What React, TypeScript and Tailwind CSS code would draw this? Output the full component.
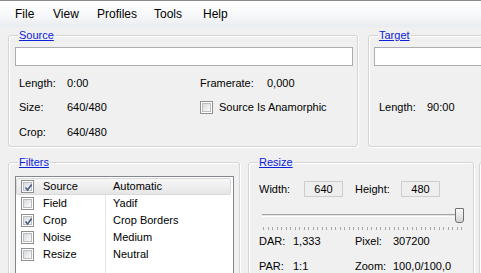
import React from 'react';

const Check: React.FC<{ checked?: boolean }> = ({ checked }) => (
  <span className="flex h-[13px] w-[13px] shrink-0 items-center justify-center border border-[#8e8f8f] bg-white p-px">
    <span className="relative flex h-full w-full items-center justify-center border border-[#b9bdc2] bg-gradient-to-br from-[#d9dadc] to-[#fbfbfb]">
      {checked && (
        <svg width="11" height="11" viewBox="0 0 11 11" className="absolute -left-px -top-px">
          <path d="M2.5 5.5 L4.6 8 L8.6 2.6" fill="none" stroke="#4a5f8c" strokeWidth="1.7" />
        </svg>
      )}
    </span>
  </span>
);

const Group: React.FC<{ title: string; className: string; children?: React.ReactNode }> = ({ title, className, children }) => (
  <div
    className={`relative shrink-0 rounded-[3px] border border-[#d5d5d5] shadow-[inset_1px_1px_0_#ffffff,1px_1px_0_#ffffff] ${className}`}
  >
    {title && (
      <span className="absolute left-[9px] top-[-7px] bg-[#f0f0f0] px-px leading-[13px] text-[#0a22d8] underline">
        {title}
      </span>
    )}
    {children}
  </div>
);

const filters = [
  { name: 'Source', value: 'Automatic', on: true, selected: true },
  { name: 'Field', value: 'Yadif', on: false },
  { name: 'Crop', value: 'Crop Borders', on: true },
  { name: 'Noise', value: 'Medium', on: false },
  { name: 'Resize', value: 'Neutral', on: false },
];

const menu = [
  { label: 'File', w: 'w-[38px]' },
  { label: 'View', w: 'w-[44px]' },
  { label: 'Profiles', w: 'w-[57px]' },
  { label: 'Tools', w: 'w-[49px]' },
  { label: 'Help', w: 'w-[40px]' },
];

// tick marks under the trackbar
const ticks = Array.from({ length: 45 }, (_, i) => Math.round(i * 4.5) + 0.5);

export default function App() {
  return (
    <div className="h-[273px] w-[481px] overflow-hidden bg-[#f0f0f0] font-['Liberation_Sans',Arial,sans-serif] text-[11px] leading-[13px] text-black">
      {/* menu strip */}
      <div className="flex h-[27px] items-center border-t border-[#8c8c8c] bg-gradient-to-b from-white via-[#f8f9fa] to-[#e9ecf0] pl-[15px] text-[12px]">
        {menu.map((m) => (
          <span key={m.label} className={`${m.w} shrink-0`}>
            {m.label}
          </span>
        ))}
      </div>

      <div className="pl-2 pt-[8px]">
        <div className="flex">
          <Group title="Source" className="h-[112px] w-[350px]">
            <div className="ml-[6px] mt-[11px] h-[19px] w-[338px] border border-[#abadb3] bg-white" />
            <div className="mt-[5px] pl-[10px]">
              <div className="flex h-[24px] items-center">
                <span className="w-[48px]">Length:</span>
                <span className="w-[133px]">0:00</span>
                <span className="w-[67px]">Framerate:</span>
                <span>0,000</span>
              </div>
              <div className="flex h-[25px] items-center">
                <span className="w-[48px]">Size:</span>
                <span className="w-[133px]">640/480</span>
                <Check />
                <span className="ml-[6px]">Source Is Anamorphic</span>
              </div>
              <div className="flex h-[24px] items-center">
                <span className="w-[48px]">Crop:</span>
                <span>640/480</span>
              </div>
            </div>
          </Group>

          <Group title="Target" className="ml-[10px] h-[112px] w-[200px]">
            <div className="ml-[5px] mt-[11px] h-[19px] w-[190px] border border-[#abadb3] bg-white" />
            <div className="mt-[5px] pl-[10px]">
              <div className="h-[24px]" />
              <div className="flex h-[25px] items-center">
                <span className="w-[48px]">Length:</span>
                <span>90:00</span>
              </div>
            </div>
          </Group>
        </div>

        <div className="mt-[15px] flex">
          <Group title="Filters" className="h-[140px] w-[232px]">
            <div className="relative ml-[6px] mt-[13px] h-[120px] w-[219px] border border-[#828790] bg-white pt-px">
              <span className="absolute inset-y-0 left-[89px] w-px bg-[#e8e8e8]" />
              {filters.map((f) => (
                <div
                  key={f.name}
                  className={`relative flex h-[17px] items-center pl-[4px] ${
                    f.selected
                      ? 'mr-[2px] rounded-[2px] border border-[#d9d9d9] bg-gradient-to-b from-[#f7f7f7] to-[#e6e6e6]'
                      : 'border border-transparent'
                  }`}
                >
                  <Check checked={f.on} />
                  <span className="ml-[9px] w-[70px]">{f.name}</span>
                  <span>{f.value}</span>
                </div>
              ))}
            </div>
          </Group>

          <Group title="Resize" className="ml-[8px] h-[140px] w-[226px]">
            <div className="mt-[18px] flex items-center pl-[10px]">
              <span className="w-[45px]">Width:</span>
              <span className="flex h-[16px] w-[39px] items-center justify-center border border-[#cdcdcd] bg-[#eeeeee]">
                640
              </span>
              <span className="ml-[12px] w-[46px]">Height:</span>
              <span className="flex h-[16px] w-[39px] items-center justify-center border border-[#cdcdcd] bg-[#eeeeee]">
                480
              </span>
            </div>

            <div className="relative ml-[13px] mt-[11px] flex h-[15px] w-[202px] items-center">
              <div className="mr-[3px] h-[3px] flex-1 border-t border-[#a5a5a5] border-b border-b-white bg-[#e4e4e4]" />
              <div className="absolute right-0 top-0 h-[15px] w-[9px] rounded-b-[3px] rounded-t-[1px] border border-[#707070] bg-gradient-to-b from-[#fafafa] to-[#d4d4d4]" />
            </div>
            <svg width="200" height="3" className="ml-[14px] mt-[4px] block">
              {ticks.map((x) => (
                <line key={x} x1={x} y1="0" x2={x} y2="3" stroke="#a8a8a8" strokeWidth="1" />
              ))}
            </svg>

            <div className="mt-[5px] flex pl-[10px]">
              <span className="w-[34px]">DAR:</span>
              <span className="w-[62px]">1,333</span>
              <span className="w-[38px]">Pixel:</span>
              <span>307200</span>
            </div>
            <div className="mt-[12px] flex pl-[10px]">
              <span className="w-[34px]">PAR:</span>
              <span className="w-[62px]">1:1</span>
              <span className="w-[38px]">Zoom:</span>
              <span>100,0/100,0</span>
            </div>
          </Group>

          <Group title="" className="ml-[5px] h-[140px] w-[60px]" />
        </div>
      </div>
    </div>
  );
}
